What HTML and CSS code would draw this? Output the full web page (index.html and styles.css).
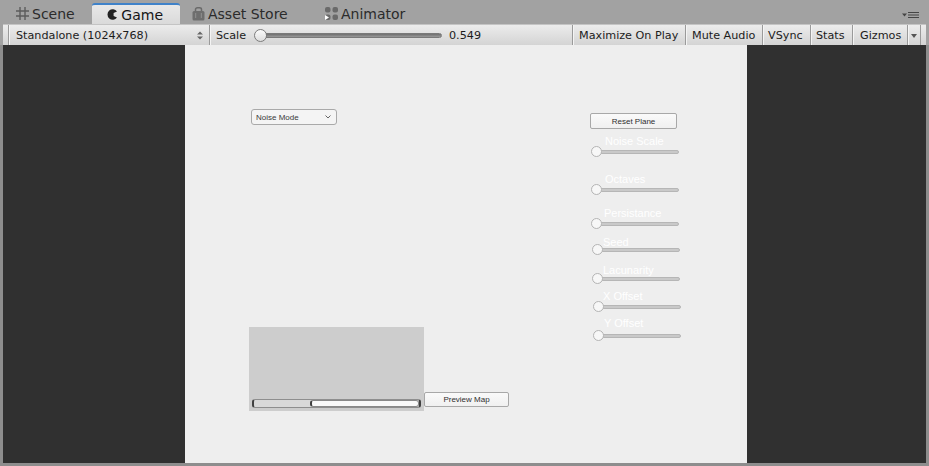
FILE: index.html
```html
<!DOCTYPE html>
<html>
<head>
<meta charset="utf-8">
<link rel="stylesheet" href="styles.css">
</head>
<body>
<div class="window">
  <div class="tabbar">
    <div class="tab tab-scene">
      <span class="ico"><svg width="13" height="13" viewBox="0 0 13 13"><path d="M4 0v13M9 0v13M0 4h13M0 9h13" stroke="#5c5c5c" stroke-width="1.4" fill="none"/></svg></span>
      Scene
    </div>
    <div class="tab active tab-game">
      <span class="ico"><svg width="11" height="11" viewBox="0 0 11 11"><path d="M10 2.6 A5.2 5.2 0 1 0 10 8.4 L6.6 7 V4 Z" fill="#222"/></svg></span>
      Game
    </div>
    <div class="tab tab-store">
      <span class="ico"><svg width="13" height="14" viewBox="0 0 13 14"><path d="M3.5 5 V2.5 Q3.5 0.8 5.5 0.8 H7.5 Q9.5 0.8 9.5 2.5 V5" stroke="#6a6a6a" stroke-width="1.5" fill="none"/><rect x="0.5" y="4" width="12" height="9.5" rx="1.5" fill="#6e6e6e"/><rect x="3" y="6" width="1.2" height="5" fill="#8a8a8a"/><rect x="8.8" y="6" width="1.2" height="5" fill="#8a8a8a"/></svg></span>
      Asset Store
    </div>
    <div class="tab tab-anim">
      <span class="ico"><svg width="15" height="15" viewBox="0 0 15 15"><rect x="1" y="1" width="5.5" height="5.5" rx="2" fill="#6a6a6a"/><rect x="8.5" y="1" width="5.5" height="5.5" rx="2" fill="#6a6a6a"/><rect x="1" y="8.5" width="5.5" height="5.5" rx="2" fill="#6a6a6a"/><rect x="8.5" y="8.5" width="5.5" height="5.5" rx="2" fill="#6a6a6a"/><path d="M1 9 L5 11.5 L1 14 Z" fill="#fff"/></svg></span>
      Animator
    </div>
    <div class="tab-spacer"></div>
    <div class="menu-icon">
      <svg width="18" height="8" viewBox="0 0 18 8"><path d="M0 2.5 H5 L2.5 5.5 Z" fill="#444"/><path d="M6 1.5 H17 M6 4 H17 M6 6.5 H17" stroke="#444" stroke-width="1.2"/></svg>
    </div>
  </div>

  <div class="toolbar">
    <div class="tb-item tb-std">
      <span>Standalone (1024x768)</span>
      <svg class="updown" width="6" height="9" viewBox="0 0 6 9"><path d="M0 3.5 L3 0.5 L6 3.5 Z M0 5.5 L3 8.5 L6 5.5 Z" fill="#666"/></svg>
    </div>
    <div class="tb-item tb-scale">
      <span class="scale-label">Scale</span>
      <div class="scale-slider">
        <span class="scale-thumb"></span>
        <span class="scale-track"></span>
      </div>
      <span class="scale-value">0.549</span>
    </div>
    <div class="tb-item tb-btn w-max">Maximize On Play</div>
    <div class="tb-item tb-btn w-mute">Mute Audio</div>
    <div class="tb-item tb-btn w-vsync">VSync</div>
    <div class="tb-item tb-btn w-stats">Stats</div>
    <div class="tb-item tb-btn w-gizmos">Gizmos</div>
    <div class="tb-item w-arrow"><svg width="6" height="4" viewBox="0 0 6 4"><path d="M0 0 H6 L3 4 Z" fill="#555"/></svg></div>
  </div>

  <div class="viewport">
    <div class="letterbox"></div>
    <div class="game">
      <div class="left-col">
        <div class="select">
          <span>Noise Mode</span>
          <svg width="6" height="4" viewBox="0 0 6 4"><path d="M0.5 0.5 L3 3 L5.5 0.5" stroke="#555" stroke-width="0.9" fill="none"/></svg>
        </div>
        <div class="preview-row">
          <div class="panel">
            <div class="hscroll">
              <div class="hthumb"></div>
            </div>
          </div>
          <div class="btn btn-preview">Preview Map</div>
        </div>
      </div>
      <div class="right-col">
        <div class="btn btn-reset">Reset Plane</div>
        <div class="slider s1"><span class="label">Noise Scale</span><span class="thumb"></span><span class="track"></span></div>
        <div class="slider s2"><span class="label">Octaves</span><span class="thumb"></span><span class="track"></span></div>
        <div class="slider s3"><span class="label">Persistance</span><span class="thumb"></span><span class="track"></span></div>
        <div class="slider s4"><span class="label">Seed</span><span class="thumb"></span><span class="track"></span></div>
        <div class="slider s5"><span class="label">Lacunarity</span><span class="thumb"></span><span class="track"></span></div>
        <div class="slider s6"><span class="label">X Offset</span><span class="thumb"></span><span class="track"></span></div>
        <div class="slider s7"><span class="label">Y Offset</span><span class="thumb"></span><span class="track"></span></div>
      </div>
    </div>
    <div class="letterbox"></div>
  </div>
</div>
</body>
</html>
```

FILE: styles.css
```css
* { box-sizing: border-box; }

html, body {
  margin: 0;
  padding: 0;
}

body {
  width: 929px;
  height: 466px;
  overflow: hidden;
  background: #a2a2a2;
  font-family: "DejaVu Sans", sans-serif;
}

.window {
  display: flex;
  flex-direction: column;
  height: 466px;
}

/* ---------- tab bar ---------- */
.tabbar {
  height: 24px;
  display: flex;
  align-items: flex-end;
  padding-left: 1px;
  background: #a2a2a2;
}

.tab {
  height: 21px;
  display: flex;
  align-items: center;
  gap: 2px;
  padding: 0 17px 0 13px;
  font-size: 14px;
  color: #2b2b2b;
  white-space: nowrap;
}

.tab .ico {
  width: 16px;
  height: 16px;
  display: flex;
  align-items: center;
  justify-content: center;
}

.tab.active {
  background: linear-gradient(#e8e8e8, #dadada);
  border-top: 2px solid #3f82c9;
  border-radius: 3px 3px 0 0;
  color: #151515;
}

.tab-scene { width: 91px; }
.tab-game { width: 88px; }
.tab-store { width: 133px; padding-left: 10px; }
.tab-anim { padding-left: 10px; }

.tab-spacer { flex: 1; }

.menu-icon {
  align-self: center;
  margin-right: 9px;
  height: 8px;
  display: flex;
  margin-top: 5px;
}

/* ---------- toolbar ---------- */
.toolbar {
  height: 21px;
  margin: 0 3px;
  display: flex;
  padding: 0 5px 0 5px;
  background: linear-gradient(#ececec, #d4d4d4);
  border-top: 1px solid #c4c4c4;
  font-size: 11.2px;
  color: #1c1c1c;
}

.tb-item {
  display: flex;
  align-items: center;
  border-left: 1px solid #9a9a9a;
  box-shadow: inset 1px 0 #f4f4f4;
  white-space: nowrap;
}

.tb-std {
  width: 201px;
  padding: 0 6px 0 7px;
  justify-content: space-between;
}

.tb-std .updown { margin-top: 1px; }

.tb-scale {
  flex: 1;
  padding-left: 6px;
}

.scale-label { width: 38px; }

.scale-slider {
  width: 188px;
  display: flex;
  align-items: center;
}

.scale-thumb {
  width: 13px;
  height: 13px;
  border-radius: 50%;
  background: linear-gradient(#fbfbfb, #dedede);
  border: 1px solid #7c7c7c;
  flex: none;
  position: relative;
  z-index: 1;
}

.scale-track {
  flex: 1;
  height: 5px;
  margin-left: -4px;
  border-radius: 3px;
  background: linear-gradient(#6f6f6f, #9a9a9a);
  border: 1px solid #7a7a7a;
}

.scale-value { margin-left: 7px; }

.tb-btn {
  padding-left: 6px;
}

.w-max { width: 113px; }
.w-mute { width: 77px; }
.w-vsync { width: 48px; padding-left: 5px; }
.w-stats { width: 42px; padding-left: 5px; }
.w-gizmos { width: 55px; padding-left: 7px; }
.w-arrow {
  width: 14px;
  justify-content: center;
  border-right: 1px solid #9a9a9a;
  padding-top: 1px;
}

/* ---------- viewport ---------- */
.viewport {
  flex: 1;
  display: grid;
  grid-template-columns: 182px 562px 1fr;
  border: 3px solid #8d8d8d;
  border-top: 0;
}

.letterbox {
  background: #303030;
}

.game {
  background: #eeeeee;
  display: flex;
  padding-left: 64px;
  font-family: "Liberation Sans", Arial, sans-serif;
}

.left-col {
  width: 260px;
  display: flex;
  flex-direction: column;
}

.select {
  margin: 64px 0 0 2px;
  width: 86px;
  height: 16px;
  border: 1px solid #a9a9a9;
  border-radius: 3px;
  background: #f4f4f4;
  display: flex;
  align-items: center;
  justify-content: space-between;
  padding: 0 5px 0 4px;
  font-size: 8px;
  color: #3a3a3a;
}

.preview-row {
  margin-top: 202px;
  display: flex;
  align-items: flex-end;
}

.panel {
  width: 175px;
  height: 84px;
  background: #cdcdcd;
  padding: 72px 3px 0;
}

.hscroll {
  height: 9px;
  border: 1px solid #8e8e8e;
  border-left: 2px solid #404040;
  border-right: 2px solid #404040;
  border-radius: 3px;
  background: #d9d9d9;
  padding-left: 56px;
}

.hthumb {
  height: 100%;
  background: #fafafa;
  border: 1px solid #8a8a8a;
  border-left: 2px solid #404040;
  border-radius: 3px;
}

.btn {
  background: linear-gradient(#fafafa, #f0f0f0);
  border: 1px solid #a8a8a8;
  border-radius: 2px;
  display: flex;
  align-items: center;
  justify-content: center;
  font-size: 8px;
  color: #2e2e2e;
}

.btn-preview {
  width: 85px;
  height: 15px;
  margin-bottom: 4px;
}

.right-col {
  margin-left: 81px;
  padding-top: 68px;
  width: 92px;
  display: flex;
  flex-direction: column;
}

.btn-reset {
  width: 87px;
  height: 16px;
}

.slider {
  position: relative;
  width: 88px;
  height: 11px;
  margin-left: 1px;
  display: flex;
  align-items: center;
}

.slider .thumb {
  width: 11px;
  height: 11px;
  border-radius: 50%;
  background: #f7f7f7;
  border: 1px solid #b4b4b4;
  flex: none;
  position: relative;
  z-index: 1;
}

.slider .track {
  flex: 1;
  height: 4px;
  margin-left: -5px;
  border-radius: 2px;
  background: #c9c9c9;
  border: 1px solid #b6b6b6;
}

.slider .label {
  position: absolute;
  left: 14px;
  top: -11px;
  font-size: 11px;
  line-height: 13px;
  color: #ffffff;
  white-space: nowrap;
}

.s1 { margin-top: 17px; }
.s2 { margin-top: 27px; }
.s3 { margin-top: 23px; }
.s4 { margin-top: 15px; margin-left: 2px; }
.s5 { margin-top: 18px; margin-left: 2px; }
.s6 { margin-top: 17px; margin-left: 3px; }
.s7 { margin-top: 18px; margin-left: 3px; }

.s3 .label { left: 13px; }
.s4 .label { top: -8px; left: 11px; }
.s5 .label { top: -9px; left: 11px; }
.s6 .label { left: 10px; }
.s7 .label { top: -13px; left: 11px; }
```
